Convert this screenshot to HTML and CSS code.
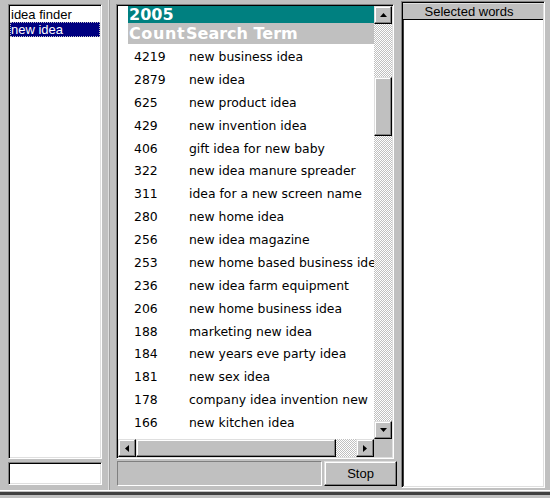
FILE: index.html
```html
<!DOCTYPE html>
<html>
<head>
<meta charset="utf-8">
<link rel="stylesheet" href="styles.css">
</head>
<body>
<div class="window">
  <div class="left">
    <div class="listbox sunken">
      <div class="item">idea finder</div>
      <div class="item selected">new idea</div>
    </div>
    <div class="edit sunken"></div>
  </div>
  <div class="splitter"></div>
  <div class="middle">
    <div class="grid sunken">
      <div class="cells">
        <div class="year">2005</div>
        <div class="colhead"><span class="c1">Count</span><span class="c2">Search Term</span></div>
        <div class="rows">
          <div class="row"><span class="c1">4219</span><span class="c2">new business idea</span></div>
          <div class="row"><span class="c1">2879</span><span class="c2">new idea</span></div>
          <div class="row"><span class="c1">625</span><span class="c2">new product idea</span></div>
          <div class="row"><span class="c1">429</span><span class="c2">new invention idea</span></div>
          <div class="row"><span class="c1">406</span><span class="c2">gift idea for new baby</span></div>
          <div class="row"><span class="c1">322</span><span class="c2">new idea manure spreader</span></div>
          <div class="row"><span class="c1">311</span><span class="c2">idea for a new screen name</span></div>
          <div class="row"><span class="c1">280</span><span class="c2">new home idea</span></div>
          <div class="row"><span class="c1">256</span><span class="c2">new idea magazine</span></div>
          <div class="row"><span class="c1">253</span><span class="c2">new home based business idea</span></div>
          <div class="row"><span class="c1">236</span><span class="c2">new idea farm equipment</span></div>
          <div class="row"><span class="c1">206</span><span class="c2">new home business idea</span></div>
          <div class="row"><span class="c1">188</span><span class="c2">marketing new idea</span></div>
          <div class="row"><span class="c1">184</span><span class="c2">new years eve party idea</span></div>
          <div class="row"><span class="c1">181</span><span class="c2">new sex idea</span></div>
          <div class="row"><span class="c1">178</span><span class="c2">company idea invention new</span></div>
          <div class="row"><span class="c1">166</span><span class="c2">new kitchen idea</span></div>
        </div>
      </div>
      <div class="vscroll">
        <div class="sbtn"><svg width="7" height="4" viewBox="0 0 7 4"><polygon points="3.5,0 7,4 0,4" fill="#000"/></svg></div>
        <div class="vtrack"><div class="vthumb"></div></div>
        <div class="sbtn"><svg width="7" height="4" viewBox="0 0 7 4"><polygon points="0,0 7,0 3.5,4" fill="#000"/></svg></div>
      </div>
      <div class="hscroll">
        <div class="sbtn"><svg width="4" height="7" viewBox="0 0 4 7"><polygon points="4,0 4,7 0,3.5" fill="#000"/></svg></div>
        <div class="hthumb"></div>
        <div class="htrack"></div>
        <div class="sbtn"><svg width="4" height="7" viewBox="0 0 4 7"><polygon points="0,0 4,3.5 0,7" fill="#000"/></svg></div>
      </div>
      <div class="corner"></div>
    </div>
    <div class="bottom">
      <div class="status"></div>
      <div class="stop">Stop</div>
    </div>
  </div>
  <div class="right">
    <div class="selbox sunken">
      <div class="selhead">Selected words</div>
      <div class="sellist"></div>
    </div>
  </div>
</div>
<div class="footer"></div>
</body>
</html>
```
FILE: styles.css
```css
* { box-sizing: border-box; }
html, body { margin: 0; padding: 0; }
body {
  width: 550px;
  height: 498px;
  overflow: hidden;
  background: #c0c0c0;
  font-family: "Liberation Sans", Arial, sans-serif;
  font-size: 13px;
  color: #000;
}
.window { display: flex; height: 490px; }

.sunken {
  border: 1px solid;
  border-color: #808080 #fff #fff #808080;
  padding: 1px;
  box-shadow: inset 1px 1px #000, inset -1px -1px #dfdfdf;
}
.sbtn, .vthumb, .hthumb, .stop {
  background: #c0c0c0;
  border: 1px solid;
  border-color: #dfdfdf #000 #000 #dfdfdf;
  box-shadow: inset -1px -1px #808080, inset 1px 1px #fff;
}

/* left column */
.left {
  width: 102px;
  padding: 4px 0 0 8px;
  display: flex;
  flex-direction: column;
  gap: 3px;
}
.listbox {
  height: 455px;
  background: #fff;
  padding-top: 2px;
}
.item {
  line-height: 15px;
  height: 15px;
  padding-left: 1px;
  white-space: nowrap;
}
.item.selected {
  background: #000080;
  color: #fff;
  outline: 1px dotted #c0c0c0;
  outline-offset: -1px;
}
.edit { height: 23px; background: #fff; }

.splitter {
  width: 8px;
  background: linear-gradient(to right, transparent 6px, #dfdfdf 6px, #dfdfdf 7px, #a0a0a0 7px);
}

/* middle */
.middle {
  width: 288px;
  padding: 4px 0 0 6px;
  display: flex;
  flex-direction: column;
}
.grid {
  width: 278px;
  height: 455px;
  display: grid;
  grid-template-columns: 1fr 18px;
  grid-template-rows: 1fr 18px;
}
.cells {
  background: #fff;
  overflow: hidden;
  padding-left: 10px;
  min-width: 0;
  min-height: 0;
}
.year {
  background: #008080;
  color: #fff;
  font: bold 16px "DejaVu Sans", Verdana, sans-serif;
  height: 17px;
  line-height: 17px;
  padding-left: 1px;
  white-space: nowrap;
}
.colhead {
  display: flex;
  background: #c0c0c0;
  color: #fff;
  font: bold 16px "DejaVu Sans", Verdana, sans-serif;
  height: 21px;
  line-height: 21px;
  white-space: nowrap;
}
.colhead .c1 { width: 58px; flex: none; padding-left: 1px; letter-spacing: 0.6px; }
.rows {
  padding-top: 2px;
  font: 12.4px "DejaVu Sans", Verdana, sans-serif;
  color: #000;
}
.row {
  display: flex;
  height: 22.875px;
  line-height: 22.875px;
  white-space: nowrap;
}
.row .c1 { width: 58px; flex: none; padding-left: 6px; }
.row .c2 { padding-left: 3px; }

.vscroll, .htrack, .vtrack {
  background: conic-gradient(#c0c0c0 25%, #ffffff 0 50%, #c0c0c0 0 75%, #ffffff 0) 0 0 / 2px 2px;
}
.vscroll { display: flex; flex-direction: column; }
.sbtn {
  width: 18px;
  height: 18px;
  flex: none;
  display: flex;
  align-items: center;
  justify-content: center;
}
.sbtn svg { display: block; }
.vtrack { flex: 1; }
.vthumb { height: 59px; margin-top: 53px; }
.hscroll { display: flex; background: #c0c0c0; }
.hthumb { width: 200px; flex: none; }
.htrack { flex: 1; }
.corner { background: #c0c0c0; }

.bottom {
  display: flex;
  margin-top: 2px;
  height: 25px;
}
.status {
  margin-left: 1px;
  width: 205px;
  border: 1px solid;
  border-color: #808080 #fff #fff #808080;
}
.stop {
  margin-left: 2px;
  width: 73px;
  display: flex;
  align-items: center;
  justify-content: center;
  font-size: 13px;
}

/* right */
.right {
  flex: 1;
  padding: 1px 0 0 3px;
}
.selbox {
  width: 144px;
  height: 487px;
  display: flex;
  flex-direction: column;
}
.selhead {
  height: 17px;
  line-height: 15px;
  text-align: center;
  background: #c0c0c0;
  border-top: 1px solid #dfdfdf;
  border-bottom: 1px solid #000;
  padding-right: 8px;
  white-space: nowrap;
}
.sellist {
  flex: 1;
  background: #fff;
  border-left: 1px solid #404040;
}

.footer {
  height: 8px;
  border-top: 1px solid #fff;
  background: linear-gradient(to bottom, #c0c0c0 0 1px, #404040 1px 4px, #c0c0c0 4px);
}
```
